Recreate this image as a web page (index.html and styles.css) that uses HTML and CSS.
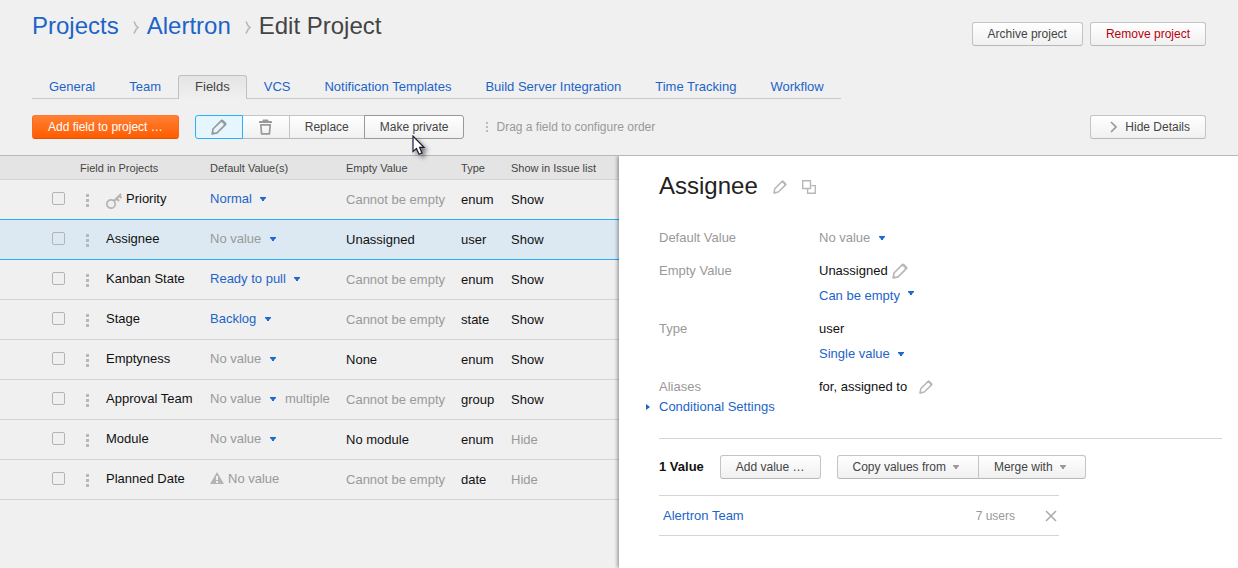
FILE: index.html
```html
<!DOCTYPE html>
<html lang="en">
<head>
<meta charset="utf-8">
<title>Edit Project</title>
<link rel="stylesheet" href="styles.css">
</head>
<body>
<svg class="sprite" aria-hidden="true">
  <symbol id="pencil" viewBox="0 0 16 16">
    <path d="M10.4 1.6Q11 1 11.600 1.600L14.400 4.400Q15 5 14.400 5.600L6 13.800 1.200 14.800 2 10Z" fill="none" stroke="currentColor" stroke-width="1.700" stroke-linejoin="round"/>
    <path d="M9.200 2.600 11 .8 15.200 5 13.400 6.800 12.400 5.800 12.800 5 11 3.200 10.200 3.600ZM.6 15.400 1.200 12 4 14.800Z" fill="currentColor"/>
  </symbol>
  <symbol id="trash" viewBox="0 0 16 16">
    <path d="M1 4V2.600Q1 2 2 2H4.500V1.400Q4.500 .5 5.500 .5H9.500Q10.500 .5 10.500 1.400V2H13Q14 2 14 2.600V4Z" fill="currentColor"/>
    <path d="M2.800 5.800H12.200L11.400 14.800H3.600Z" fill="none" stroke="currentColor" stroke-width="1.700" stroke-linejoin="round"/>
  </symbol>
  <symbol id="key" viewBox="0 0 16 16">
    <circle cx="5" cy="11" r="4.200" fill="none" stroke="currentColor" stroke-width="1.700"/>
    <path d="M8 8 15 1M10.500 5.500l2.500 2.500M13 2.500l2.500 2.500" fill="none" stroke="currentColor" stroke-width="2.200"/>
  </symbol>
  <symbol id="warning" viewBox="0 0 14 12">
    <path fill-rule="evenodd" d="M7 0 14 12H0ZM6 4v4h2V4ZM6 9v2h2V9Z" fill="currentColor"/>
  </symbol>
  <symbol id="copy" viewBox="0 0 14 14">
    <path d="M.7 .7H8.500V8.500H.7ZM9 5.600H13.300V13.300H5.600V9" fill="none" stroke="currentColor" stroke-width="1.400"/>
  </symbol>
  <symbol id="down" viewBox="0 0 6 4"><path d="M0 0H6V1L4 3V4H2V3L0 1Z" fill="currentColor"/></symbol>
  <symbol id="next" viewBox="0 0 6 13"><path d="M1 .5 Q2.500 5 5 6.500 2.500 8 1 12.500" fill="none" stroke="currentColor" stroke-width="1.600"/></symbol>
</svg>

<header class="top">
  <nav class="crumbs" aria-label="Breadcrumb">
    <a href="#">Projects</a><svg class="sep"><use href="#next"/></svg><a href="#">Alertron</a><svg class="sep"><use href="#next"/></svg><h1>Edit Project</h1>
  </nav>
  <div class="actions">
    <button class="btn" type="button">Archive project</button>
    <button class="btn danger" type="button">Remove project</button>
  </div>
</header>

<nav class="tabs" aria-label="Project settings">
  <a href="#">General</a>
  <a href="#">Team</a>
  <a href="#" class="active" aria-current="page">Fields</a>
  <a href="#">VCS</a>
  <a href="#">Notification Templates</a>
  <a href="#">Build Server Integration</a>
  <a href="#">Time Tracking</a>
  <a href="#">Workflow</a>
</nav>

<div class="toolbar">
  <button class="btn primary" type="button">Add field to project …</button>
  <div class="group">
    <button class="btn icon on" type="button" aria-label="Edit"><svg class="ico"><use href="#pencil"/></svg></button>
    <button class="btn icon" type="button" aria-label="Delete"><svg class="ico"><use href="#trash"/></svg></button>
    <button class="btn" type="button">Replace</button>
    <div class="hovered">
      <button class="btn hover" type="button">Make private</button>
      <svg class="cursor" viewBox="0 0 20 26" aria-hidden="true"><path d="M1 1V16.500L4.500 13.500 7 19.200 10 17.900 7.600 12.400H12Z" fill="#fff" stroke="#1b1b33" stroke-width="1.200"/></svg>
    </div>
  </div>
  <span class="hint"><i class="grip small"></i>Drag a field to configure order</span>
  <button class="btn toggle" type="button"><svg class="chev" viewBox="0 0 7 12"><path d="M1 1 6 6 1 11" fill="none" stroke="#999" stroke-width="1.600"/></svg>Hide Details</button>
</div>

<main class="split">
  <section class="list">
    <table class="fields">
      <colgroup><col class="c-check"><col class="c-grip"><col class="c-name"><col class="c-default"><col class="c-empty"><col class="c-type"><col></colgroup>
      <thead>
        <tr><td></td><th colspan="2">Field in Projects</th><th>Default Value(s)</th><th>Empty Value</th><th>Type</th><th>Show in Issue list</th></tr>
      </thead>
      <tbody>
        <tr class="before">
          <td class="check"><input type="checkbox" aria-label="Select Priority"></td><td><i class="grip"></i></td>
          <td><svg class="ico key"><use href="#key"/></svg>Priority</td>
          <td><select class="pick" aria-label="Priority default"><option>Normal</option></select></td>
          <td class="low mute">Cannot be empty</td><td class="low">enum</td><td class="low">Show</td>
        </tr>
        <tr class="selected">
          <td class="check"><input type="checkbox" aria-label="Select Assignee"></td><td><i class="grip"></i></td>
          <td>Assignee</td>
          <td><select class="pick mute" aria-label="Assignee default"><option>No value</option></select></td>
          <td class="low">Unassigned</td><td class="low">user</td><td class="low">Show</td>
        </tr>
        <tr>
          <td class="check"><input type="checkbox" aria-label="Select Kanban State"></td><td><i class="grip"></i></td>
          <td>Kanban State</td>
          <td><select class="pick" aria-label="Kanban State default"><option>Ready to pull</option></select></td>
          <td class="low mute">Cannot be empty</td><td class="low">enum</td><td class="low">Show</td>
        </tr>
        <tr>
          <td class="check"><input type="checkbox" aria-label="Select Stage"></td><td><i class="grip"></i></td>
          <td>Stage</td>
          <td><select class="pick" aria-label="Stage default"><option>Backlog</option></select></td>
          <td class="low mute">Cannot be empty</td><td class="low">state</td><td class="low">Show</td>
        </tr>
        <tr>
          <td class="check"><input type="checkbox" aria-label="Select Emptyness"></td><td><i class="grip"></i></td>
          <td>Emptyness</td>
          <td><select class="pick mute" aria-label="Emptyness default"><option>No value</option></select></td>
          <td class="low">None</td><td class="low">enum</td><td class="low">Show</td>
        </tr>
        <tr>
          <td class="check"><input type="checkbox" aria-label="Select Approval Team"></td><td><i class="grip"></i></td>
          <td>Approval Team</td>
          <td><select class="pick mute" aria-label="Approval Team default"><option>No value</option></select><span class="multi">multiple</span></td>
          <td class="low mute">Cannot be empty</td><td class="low">group</td><td class="low">Show</td>
        </tr>
        <tr>
          <td class="check"><input type="checkbox" aria-label="Select Module"></td><td><i class="grip"></i></td>
          <td>Module</td>
          <td><select class="pick mute" aria-label="Module default"><option>No value</option></select></td>
          <td class="low">No module</td><td class="low">enum</td><td class="low mute">Hide</td>
        </tr>
        <tr>
          <td class="check"><input type="checkbox" aria-label="Select Planned Date"></td><td><i class="grip"></i></td>
          <td>Planned Date</td>
          <td class="mute"><svg class="warn"><use href="#warning"/></svg>No value</td>
          <td class="low mute">Cannot be empty</td><td class="low">date</td><td class="low mute">Hide</td>
        </tr>
      </tbody>
    </table>
  </section>

  <aside class="details">
    <div class="title">
      <h2>Assignee</h2>
      <button class="bare" type="button" aria-label="Rename"><svg class="ico14"><use href="#pencil"/></svg></button>
      <button class="bare" type="button" aria-label="Copy"><svg class="ico14"><use href="#copy"/></svg></button>
    </div>
    <dl class="props">
      <dt>Default Value</dt>
      <dd><div><select class="pick mute" aria-label="Default Value"><option>No value</option></select></div></dd>
      <dt>Empty Value</dt>
      <dd>
        <div class="line tight">Unassigned <button class="bare" type="button" aria-label="Edit empty value"><svg class="ico"><use href="#pencil"/></svg></button></div>
        <div><select class="pick raised" aria-label="Can be empty"><option>Can be empty</option></select></div>
      </dd>
      <dt>Type</dt>
      <dd>
        <div>user</div>
        <div><select class="pick" aria-label="Value count"><option>Single value</option></select></div>
      </dd>
      <dt>Aliases</dt>
      <dd><div class="line">for, assigned to <button class="bare" type="button" aria-label="Edit aliases"><svg class="ico14"><use href="#pencil"/></svg></button></div></dd>
    </dl>
    <a class="more" href="#">Conditional Settings</a>
    <div class="values">
      <h3>1 Value</h3>
      <button class="btn" type="button">Add value …</button>
      <div class="group">
        <button class="btn menu" type="button" aria-haspopup="true">Copy values from<svg class="caret"><use href="#down"/></svg></button>
        <button class="btn menu" type="button" aria-haspopup="true">Merge with<svg class="caret"><use href="#down"/></svg></button>
      </div>
    </div>
    <ul class="members">
      <li><a href="#">Alertron Team</a><span class="count">7 users</span><button class="bare" type="button" aria-label="Remove Alertron Team"><svg class="cross" viewBox="0 0 12 12"><path d="M1 1 11 11M11 1 1 11" stroke="currentColor" stroke-width="1.500"/></svg></button></li>
    </ul>
  </aside>
</main>
</body>
</html>
```
FILE: styles.css
```css
* { box-sizing: border-box; }
body {
  margin: 0;
  min-height: 100vh;
  display: flex;
  flex-direction: column;
  background: #f0f0f0;
  color: #111;
  font: 13px/16px "Liberation Sans", Arial, sans-serif;
}
h1, h2, h3, dl, dd, ul { margin: 0; padding: 0; font-weight: normal; }
a { color: #1d64c8; text-decoration: none; }
.sprite { position: absolute; width: 0; height: 0; }
.ico { width: 16px; height: 16px; display: block; }
.ico14 { width: 14px; height: 14px; display: block; }
.mute { color: #999; }

.btn {
  height: 24px;
  padding: 0 15px;
  border: 1px solid #c4c4c4;
  border-bottom-color: #b8b8b8;
  border-radius: 3px;
  background: linear-gradient(#fff, #f0f0f0);
  color: #444;
  font: 12px/14px "Liberation Sans", Arial, sans-serif;
  white-space: nowrap;
}
.bare { padding: 0; border: 0; background: none; color: #b8b8b8; }
.danger { color: #b8000c; }

.top {
  display: flex;
  justify-content: space-between;
  align-items: flex-start;
  padding: 12px 32px 0;
}
.crumbs { display: flex; font-size: 24px; line-height: 28px; }
.crumbs h1 { font-size: 24px; color: #444; }
.sep { width: 6px; height: 13px; margin: 9px 8px 0 14px; color: #b8b8b8; }
.actions { display: flex; gap: 7px; padding-top: 10px; }

.tabs {
  display: flex;
  align-self: flex-start;
  margin: 29px 32px 0;
  border-bottom: 1px solid #c8c8c8;
}
.tabs a {
  padding: 3px 16px 4px;
  margin-bottom: -1px;
  border: 1px solid transparent;
  border-bottom: 0;
}
.tabs .active {
  border-color: #c0c0c0;
  border-radius: 3px 3px 0 0;
  background: linear-gradient(#e4e4e4, #f0f0f0);
  color: #444;
}

.toolbar { display: flex; align-items: center; gap: 16px; padding: 16px 32px; }
.primary {
  border-color: #ff7a30 #fa6a1c #e05500;
  background: linear-gradient(#ff8033, #ff5c00);
  color: #fff;
}
.group { display: flex; }
.group .btn { border-radius: 0; }
.group > * + * { margin-left: -1px; }
.group > .btn:first-child { border-radius: 3px 0 0 3px; }
.group > :last-child, .group > :last-child .btn { border-radius: 0 3px 3px 0; }
.icon { color: #999; }
.group .on { border-color: #2ab0fa; background: #e6f6ff; position: relative; }
.hovered { position: relative; display: flex; }
.hover { border-color: #999; }
.cursor {
  position: absolute;
  left: 48px;
  top: 20px;
  width: 20px;
  height: 26px;
  filter: drop-shadow(3px 3px 2px rgba(0, 0, 0, .5));
}
.hint { display: flex; align-items: center; gap: 8px; padding-left: 6px; color: #999; font-size: 12px; }
.toggle { margin-left: auto; display: flex; align-items: center; gap: 8px; padding-left: 19px; }
.chev { width: 7px; height: 12px; }
.grip {
  display: block;
  width: 3px;
  height: 13px;
  background: repeating-linear-gradient(#b8b8b8 0 3px, transparent 3px 5px);
}
.grip.small { width: 2px; height: 10px; background: repeating-linear-gradient(#bbb 0 2px, transparent 2px 4px); }

.split { flex: 1; display: grid; grid-template-columns: 1fr 1fr; border-top: 1px solid #b8b8b8; }
.fields { width: 100%; table-layout: fixed; border-spacing: 0; }
.c-check { width: 80px; }
.c-grip { width: 26px; }
.c-name { width: 104px; }
.c-default { width: 136px; }
.c-empty { width: 115px; }
.c-type { width: 50px; }
.fields thead { background: #e4e4e4; }
.fields th, .fields td { padding: 0; text-align: left; white-space: nowrap; border-bottom: 1px solid #d4d4d4; }
.fields th { height: 24px; color: #444; font-weight: normal; font-size: 11px; line-height: 14px; }
.fields tbody td { height: 40px; padding-bottom: 2px; }
.fields tbody .low { padding-bottom: 0; }
.fields .selected { background: #dce9f2; }
.fields .selected td, .fields .before td { border-bottom-color: #2aadf5; }
.fields .check { padding-left: 52px; }
.fields .grip { margin: 3px 0 0 6px; }
.key { display: inline-block; vertical-align: top; margin: 2px 4px -2px 0; color: #b4b4b4; }
.warn { width: 14px; height: 12px; margin-right: 4px; vertical-align: -1px; color: #b4b4b4; }
.multi { margin-left: 9px; color: #999; }
input[type="checkbox"] {
  appearance: none;
  display: block;
  width: 13px;
  height: 13px;
  margin: 0;
  border: 1px solid #b4b4b4;
  border-radius: 2px;
}
.pick {
  appearance: none;
  margin: 0;
  padding: 0 14px 0 0;
  border: 0;
  background: url("data:image/svg+xml,%3Csvg xmlns='http://www.w3.org/2000/svg' width='6' height='4'%3E%3Cpath d='M0 0H6V1L4 3V4H2V3L0 1Z' fill='%231d6ad0'/%3E%3C/svg%3E") no-repeat right 6px;
  color: #1d64c8;
  font: inherit;
}
.pick.mute { color: #999; }
.pick.raised { background-position: right 3px; }

.details {
  padding: 16px 16px 0 40px;
  background: #fff;
  box-shadow: -1px 0 4px rgba(0, 0, 0, .45);
  clip-path: inset(0 0 0 -6px);
}
.title { display: flex; align-items: center; gap: 15px; }
.title h2 { font-size: 24px; line-height: 28px; color: #222; }
.title .bare { padding-top: 2px; }
.props { display: grid; grid-template-columns: 160px 1fr; row-gap: 17px; margin-top: 30px; }
.props dt { color: #999; }
.props dd { display: grid; row-gap: 9px; }
.props dd > div { height: 16px; }
.props .line { display: flex; align-items: center; gap: 12px; }
.props .tight { gap: 4px; }
.more { display: block; position: relative; margin-top: 4px; }
.more::before {
  content: "";
  position: absolute;
  left: -13px;
  top: 5px;
  border: 3px solid transparent;
  border-left: 4px solid currentColor;
  border-right: 0;
}
.values {
  display: flex;
  align-items: center;
  gap: 16px;
  margin-top: 23px;
  padding: 16px 0;
  border-top: 1px solid #d4d4d4;
}
.values h3 { font-size: 13px; font-weight: bold; }
.caret { width: 6px; height: 4px; margin-left: 7px; vertical-align: 2px; color: #999; }
.menu { padding-right: 19px; }
.members { max-width: 400px; list-style: none; border-top: 1px solid #d4d4d4; }
.members li { display: flex; align-items: center; height: 40px; padding: 0 2px 0 4px; border-bottom: 1px solid #d4d4d4; }
.count { margin-left: auto; margin-right: 30px; color: #999; font-size: 12px; }
.cross { display: block; width: 12px; height: 12px; color: #aaa; }
```
